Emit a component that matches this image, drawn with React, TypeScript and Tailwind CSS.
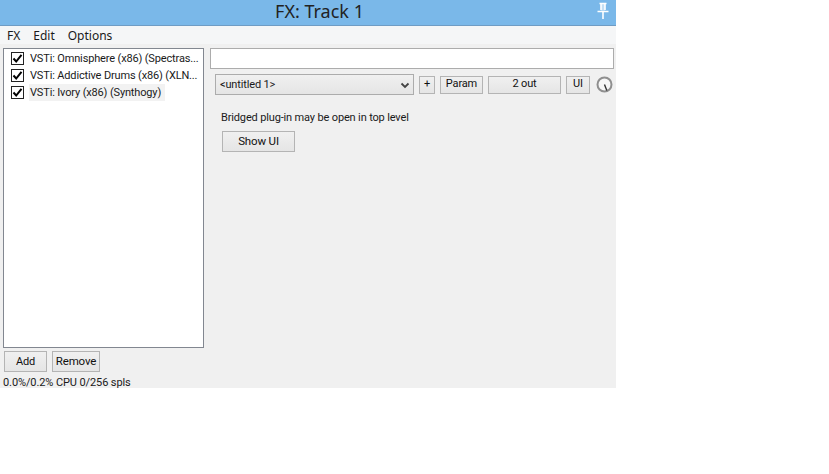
import React from "react";

const plugins = [
  "VSTi: Omnisphere (x86) (Spectras...",
  "VSTi: Addictive Drums (x86) (XLN...",
  "VSTi: Ivory (x86) (Synthogy)",
];

function Btn({ className, children }: { className: string; children: React.ReactNode }) {
  return (
    <button className={"flex items-center justify-center border border-[#b4b4b4] bg-gradient-to-b from-[#f0f0f0] to-[#e5e5e5] text-[#111] " + className}>
      {children}
    </button>
  );
}

function Check() {
  return (
    <span className="flex h-[13px] w-[13px] shrink-0 items-center justify-center border border-[#222] bg-white">
      <svg viewBox="0 0 11 11" className="h-[11px] w-[11px]">
        <path d="M1.5 5.5 L4.2 8.5 L9.5 1.8" fill="none" stroke="#000" strokeWidth="2" />
      </svg>
    </span>
  );
}

export default function App() {
  return (
    <div className="h-[474px] w-[829px] bg-white font-['Roboto',sans-serif] text-[11px] tracking-[-0.15px] text-[#1a1a1a]">
      <div className="flex h-[388px] w-[616px] flex-col overflow-hidden bg-[#f0f0f0]">
        {/* title bar */}
        <div className="relative flex h-[26px] shrink-0 items-center justify-center border-b border-[#6f9cc4] bg-[#7ab8e9] pb-[2px] pl-[23px] font-['Noto_Sans',sans-serif] text-[18px] tracking-normal text-[#222]">
          FX: Track 1
          <svg viewBox="0 0 14 18" className="absolute right-[6px] top-[2px] h-[18px] w-[14px]">
            <path d="M3.5 1.5 H10.5 M5 1.5 V8 M9 1.5 V8 M1.5 9.5 H12.5 M7 10 V17" fill="none" stroke="#fff" strokeWidth="1.6" />
            <rect x="5" y="2" width="4" height="6.5" fill="#fff" opacity="0.55" />
          </svg>
        </div>

        {/* menu */}
        <div className="flex h-[18px] shrink-0 items-center gap-[13px] bg-[#f5f6f7] pl-[7px] pt-[1px] font-['Noto_Sans',sans-serif] text-[12px] tracking-normal">
          <span>FX</span>
          <span>Edit</span>
          <span>Options</span>
        </div>

        <div className="flex min-h-0 flex-1 pl-[3px] pt-[4px]">
          {/* fx chain */}
          <div className="flex w-[201px] shrink-0 flex-col">
            <div className="flex h-[300px] shrink-0 flex-col overflow-hidden border border-[#828790] bg-white pl-[7px] pt-[1px]">
              {plugins.map((p, i) => (
                <div key={p} className="flex h-[17px] shrink-0 items-center gap-[5px]">
                  <Check />
                  <span className={"whitespace-nowrap px-[1px] pt-[1px] " + (i === 2 ? "w-[136px] bg-[#f2f2f2]" : "")}>{p}</span>
                </div>
              ))}
            </div>
            <div className="mt-[3px] flex shrink-0 gap-[5px] pl-[1px]">
              <Btn className="h-[21px] w-[43px] pt-[1px]">Add</Btn>
              <Btn className="h-[21px] w-[48px] pt-[1px] text-[11.5px]">Remove</Btn>
            </div>
            <div className="mt-[3px] shrink-0 whitespace-nowrap leading-[16px] tracking-[-0.1px]">0.0%/0.2% CPU 0/256 spls</div>
          </div>

          {/* plugin pane */}
          <div className="ml-[6px] flex w-[404px] flex-col">
            <div className="h-[21px] border border-[#acacac] bg-white" />
            <div className="mt-[5px] flex items-center pl-[5px]">
              <div className="flex h-[21px] w-[199px] items-center justify-between border border-[#acacac] bg-gradient-to-b from-[#f0f0f0] to-[#e5e5e5] pl-[4px] pr-[3px] pt-[1px]">
                <span>&lt;untitled 1&gt;</span>
                <svg viewBox="0 0 10 7" className="h-[7px] w-[10px]">
                  <path d="M1.5 1.5 L5 5 L8.5 1.5" fill="none" stroke="#444" strokeWidth="1.8" />
                </svg>
              </div>
              <Btn className="ml-[5px] h-[18px] w-[16px]">+</Btn>
              <Btn className="ml-[5px] h-[18px] w-[43px]">Param</Btn>
              <Btn className="ml-[5px] h-[18px] w-[73px]">2 out</Btn>
              <Btn className="ml-[5px] h-[18px] w-[24px]">UI</Btn>
              <svg viewBox="0 0 17 17" className="ml-[6px] h-[17px] w-[17px]">
                <circle cx="8.5" cy="8.5" r="7" fill="#f6f6f6" stroke="#8f8f8f" strokeWidth="2" />
                <path d="M8.5 8.5 L10.8 14.5" stroke="#333" strokeWidth="1.4" />
              </svg>
            </div>
            <div className="ml-[11px] mt-[15px] leading-[16px]">Bridged plug-in may be open in top level</div>
            <Btn className="ml-[12px] mt-[5px] h-[21px] w-[73px] text-[11.5px]">Show UI</Btn>
          </div>
        </div>
      </div>
    </div>
  );
}
